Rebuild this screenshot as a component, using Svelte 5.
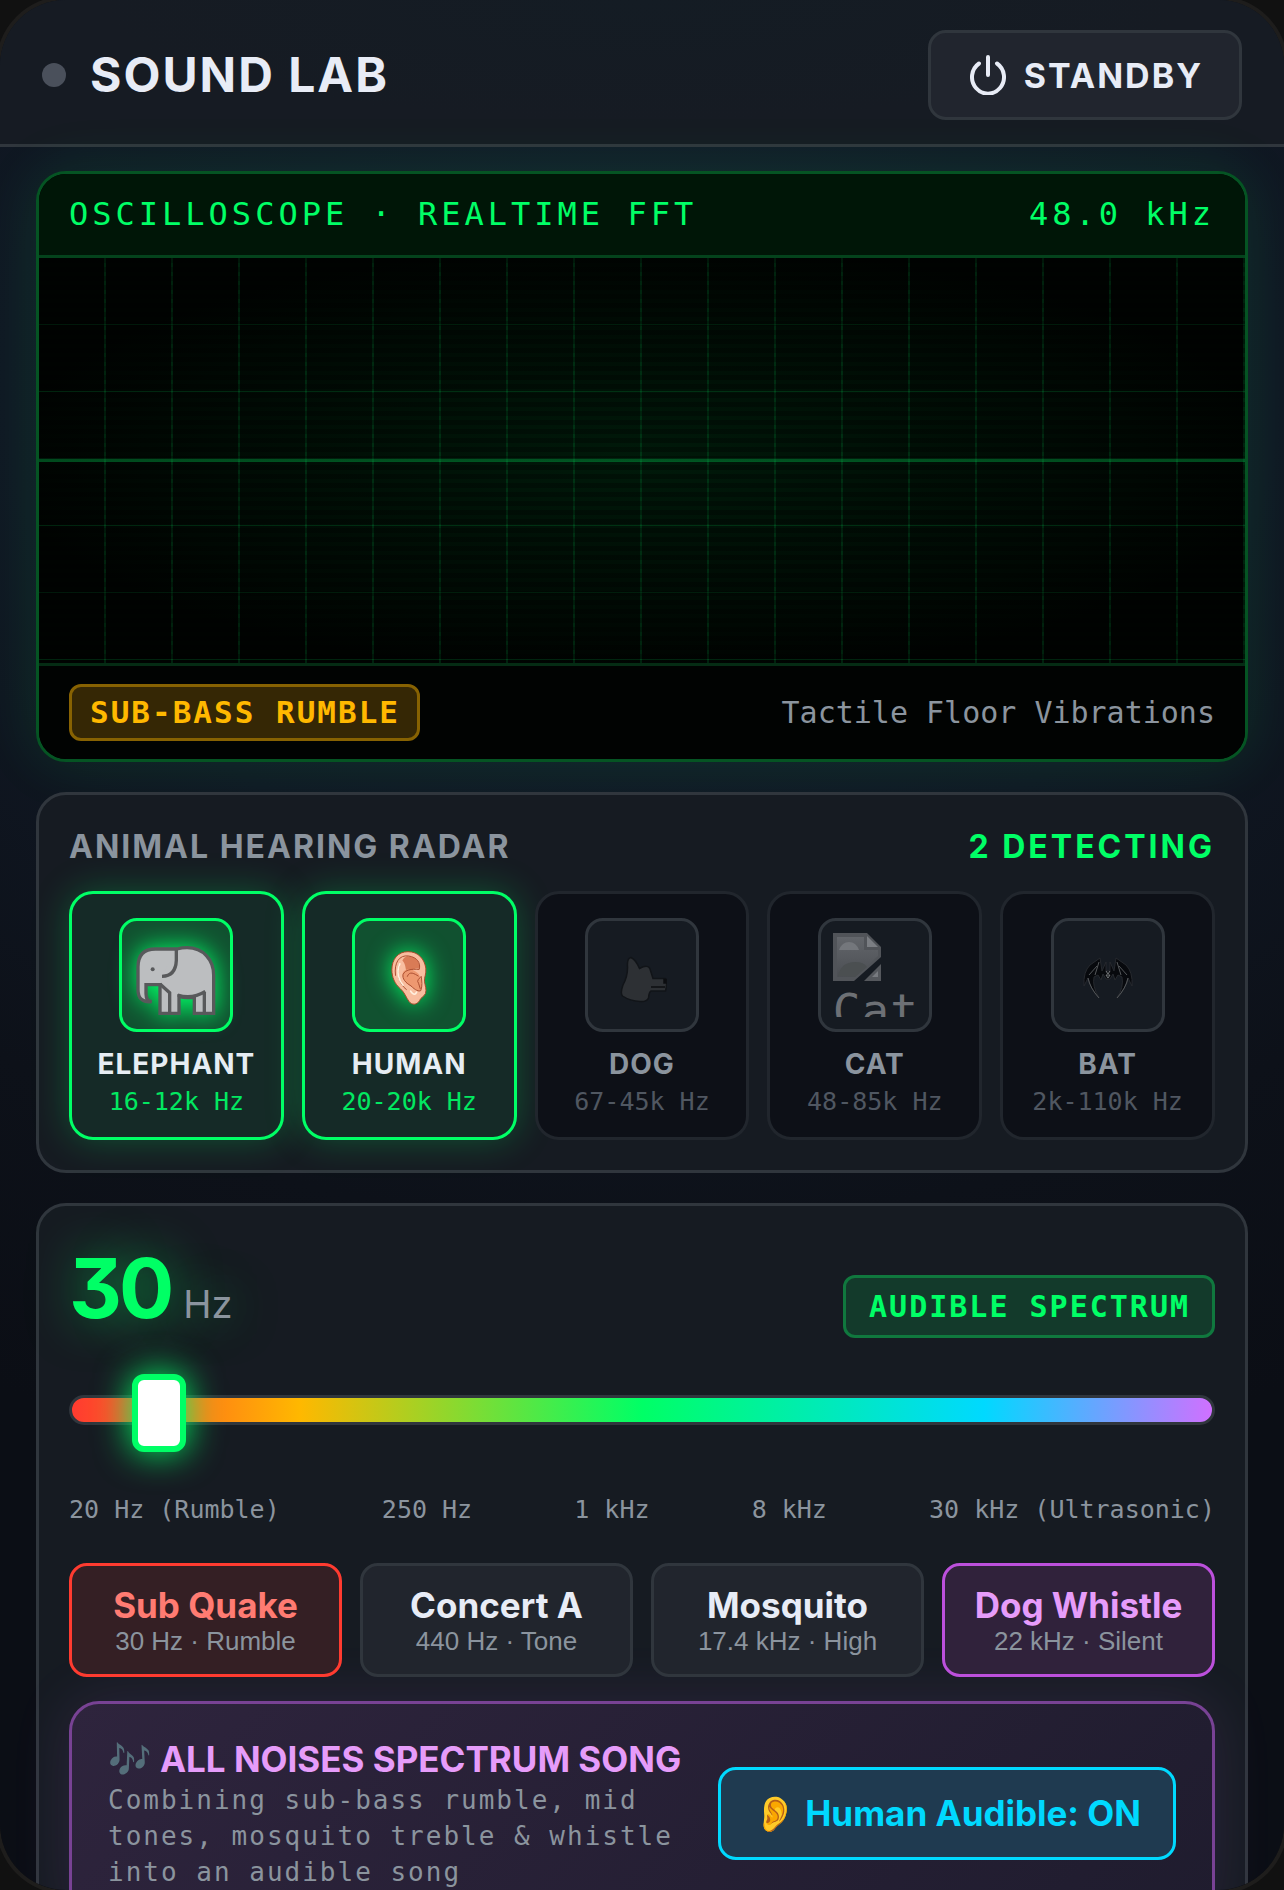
<script lang="ts">
  let frequency = $state(30);
  let humanAudible = $state(true);

  const MIN = 20;
  const MAX = 30000;

  // The slider runs on a logarithmic scale from 0 to 1000.
  let position = $state((1000 * Math.log(30 / MIN)) / Math.log(MAX / MIN));

  function slide() {
    frequency = Math.round(MIN * Math.pow(MAX / MIN, position / 1000));
  }

  function tune(hz: number) {
    frequency = hz;
    position = (1000 * Math.log(hz / MIN)) / Math.log(MAX / MIN);
  }

  const animals = [
    { id: 'elephant', name: 'ELEPHANT', range: '16-12k Hz', active: true },
    { id: 'human', name: 'HUMAN', range: '20-20k Hz', active: true },
    { id: 'dog', name: 'DOG', range: '67-45k Hz', active: false },
    { id: 'cat', name: 'CAT', range: '48-85k Hz', active: false },
    { id: 'bat', name: 'BAT', range: '2k-110k Hz', active: false }
  ];

  const presets = [
    { name: 'Sub Quake', note: '30 Hz · Rumble', hz: 30, tone: 'red' },
    { name: 'Concert A', note: '440 Hz · Tone', hz: 440, tone: 'plain' },
    { name: 'Mosquito', note: '17.4 kHz · High', hz: 17400, tone: 'plain' },
    { name: 'Dog Whistle', note: '22 kHz · Silent', hz: 22000, tone: 'purple' }
  ];

  const ticks = ['20 Hz (Rumble)', '250 Hz', '1 kHz', '8 kHz', '30 kHz (Ultrasonic)'];
</script>

<div class="device">
  <header class="topbar">
    <div class="brand">
      <span class="dot"></span>
      <h1>SOUND LAB</h1>
    </div>
    <button class="standby" type="button">
      <svg viewBox="0 0 36 40" width="36" height="40" aria-hidden="true">
        <path d="M18 2V20M9 8.500a16 16.500 0 1 0 18 0" fill="none" stroke="currentColor" stroke-width="4" stroke-linecap="round" />
      </svg>
      <span>STANDBY</span>
    </button>
  </header>

  <main>
    <section class="scope">
      <div class="scope-head">
        <span>OSCILLOSCOPE · REALTIME FFT</span>
        <span>48.0 kHz</span>
      </div>
      <div class="screen"></div>
      <div class="scope-foot">
        <strong class="badge amber">SUB-BASS RUMBLE</strong>
        <span>Tactile Floor Vibrations</span>
      </div>
    </section>

    <section class="panel radar">
      <div class="panel-head">
        <h2>ANIMAL HEARING RADAR</h2>
        <strong>2 DETECTING</strong>
      </div>
      <ul class="animals">
        {#each animals as animal (animal.id)}
          <li class="animal" class:active={animal.active}>
            <div class="portrait">
              {#if animal.id === 'elephant'}
                <svg viewBox="262 219 240 222" width="80" height="74" aria-hidden="true">
                  <g stroke="#58595b" stroke-width="10" fill="#bcbec0" transform="translate(0 7)">
                    <path d="M320 236H385Q400 232 415 232C465 232 495 270 495 314V429H437V380Q412 384 391 378V429H334V343H292V370Q292 392 309 394Q268 398 268 358V290Q268 236 320 236Z" />
                    <path d="M383 236V270Q381 317 340 318" />
                    <path d="M334 341L363 367V429M387 374Q430 388 470 363M467 365V429" fill="none" />
                  </g>
                  <circle cx="312" cy="304" r="6" fill="#58595b" />
                </svg>
              {:else if animal.id === 'human'}
                <svg viewBox="1018 230 114 170" width="38" height="56" aria-hidden="true">
                  <path d="M1072 235C1104 235 1122 258 1126 285C1128 304 1121 312 1122 325C1124 340 1129 349 1125 362C1119 374 1111 373 1107 384C1099 397 1083 398 1075 386C1066 374 1062 359 1049 348C1031 332 1023 312 1023 290C1023 258 1041 235 1072 235Z" fill="#f8bd9f" stroke="#a9492b" stroke-width="3" />
                  <path d="M1070 249C1093 248 1109 264 1107 287C1091 284 1078 292 1071 304C1062 291 1068 276 1055 262C1059 254 1064 250 1070 249Z" fill="#d97b56" />
                  <path d="M1056 300C1063 283 1086 287 1101 300C1112 309 1116 336 1111 353C1098 356 1084 342 1072 335C1061 327 1054 314 1056 300Z" fill="#ee9870" />
                  <path d="M1034 307C1029 267 1046 245 1073 248C1101 252 1111 270 1106 289C1081 287 1064 290 1057 304C1054 317 1064 329 1081 339C1094 352 1105 357 1111 353C1116 338 1114 325 1112 310L1103 320Q1099 325 1104 331L1109 347M1070 310C1076 292 1092 302 1103 309M1046 274C1037 302 1045 334 1067 350" fill="none" stroke="#ab4e31" stroke-width="3" stroke-linecap="round" />
                  <path d="M1047 272C1036 296 1044 323 1057 337M1080 355Q1092 372 1098 358" fill="none" stroke="#fff0df" stroke-width="5" stroke-linecap="round" />
                </svg>
              {:else if animal.id === 'dog'}
                <svg viewBox="-2 -5 50 54" width="50" height="54" aria-hidden="true">
                  <path d="M12 1.500Q17 4 20.500 12.500Q29 8 31 13L34 22.500H46Q49 25 46.500 35H32Q30 36 29.500 42Q28 46 21 45.500Q11 45 3.500 40Q1 37 4 29Q9 20 8.500 10Q8 2 12 1.500Z" fill="#2d3034" stroke="#111418" stroke-width="1.500" />
                  <path d="M32 31H46M45 23.500H47V27H45Z" fill="#0c0e11" stroke="#0c0e11" stroke-width="1.500" />
                </svg>
              {:else if animal.id === 'cat'}
                <div class="missing">
                  <svg viewBox="0 0 48 48" width="48" height="48" aria-hidden="true">
                    <defs>
                      <linearGradient id="paper" x1="0" y1="0" x2="0" y2="1">
                        <stop offset="0" stop-color="#63666b" />
                        <stop offset="1" stop-color="#4b4e53" />
                      </linearGradient>
                    </defs>
                    <path d="M0 0H34L48 14V24L21 48H0Z" fill="#515459" />
                    <path d="M4 4H31V17H45V23L22 44H4Z" fill="url(#paper)" />
                    <path d="M6 17Q9 9 16 9Q23 9 26 17Z" fill="#74777c" />
                    <path d="M5 43Q8 29 22 29Q31 29 34 34L22 44Z" fill="#4b4f51" />
                    <path d="M34 3L45 14H34Z" fill="#7b7e83" />
                    <path d="M48 31V48H31Z" fill="#55585d" />
                    <path d="M45 38V44H39Z" fill="#787b80" />
                  </svg>
                  <span>Cat</span>
                </div>
              {:else}
                <svg viewBox="0 0 52 42" width="52" height="42" aria-hidden="true">
                  <path d="M18 1L8 8Q1 15 2 29L6 21Q8 31 17 41Q10 29 12 20L16 18L19 23L21 17L24 22H28L31 17L33 23L36 18L40 20Q42 30 35 41Q44 31 46 21L50 29Q51 15 44 8L34 1L32 14L28 5L28 14H24L24 5L20 14Z" fill="#07090d" stroke="#26292e" stroke-width="1" />
                  <path d="M17 5L13 18M15 9L7 18M35 5L39 18M37 9L45 18M6 21Q8 31 17 41M46 21Q44 31 35 41" fill="none" stroke="#54575a" stroke-width="1" />
                  <path d="M24 14L26 17L28 14M24 18H28L26 21Z" fill="none" stroke="#777a7d" stroke-width="1" />
                </svg>
              {/if}
            </div>
            <strong>{animal.name}</strong>
            <span class="range">{animal.range}</span>
          </li>
        {/each}
      </ul>
    </section>

    <section class="panel tuner">
      <div class="readout">
        <div class="value"><strong>{frequency}</strong><span>Hz</span></div>
        <strong class="badge green">AUDIBLE SPECTRUM</strong>
      </div>
      <input class="slider" type="range" min="0" max="1000" step="any" aria-label="Frequency" bind:value={position} oninput={slide} />
      <div class="ticks">
        {#each ticks as tick}
          <span>{tick}</span>
        {/each}
      </div>
      <div class="presets">
        {#each presets as preset (preset.name)}
          <button type="button" class="preset {preset.tone}" onclick={() => tune(preset.hz)}>
            <strong>{preset.name}</strong>
            <span>{preset.note}</span>
          </button>
        {/each}
      </div>
      <div class="song">
        <div class="song-text">
          <h3><span class="notes">🎶</span> ALL NOISES SPECTRUM SONG</h3>
          <p>Combining sub-bass rumble, mid tones, mosquito treble &amp; whistle into an audible song</p>
        </div>
        <button type="button" class="audible" aria-pressed={humanAudible} onclick={() => (humanAudible = !humanAudible)}>
          <span>👂</span> Human Audible: {humanAudible ? 'ON' : 'OFF'}
        </button>
      </div>
    </section>
  </main>
</div>

<style>
  :global(body) {
    background: #111;
  }

  .device {
    --sans: Inter, 'Liberation Sans', 'Noto Color Emoji', sans-serif;
    --mono: 'DejaVu Sans Mono', 'Liberation Mono', monospace;
    --green: #00ff66;
    --line: #30363d;
    --muted: #8b949e;
    box-sizing: border-box;
    height: 100vh;
    overflow: hidden;
    border-radius: 66px;
    box-shadow: 0 0 0 4px #1e1d1c;
    background: radial-gradient(ellipse 110% 60% at 50% 20%, #13202d 0, #101824 45%, #0d1119 75%, #0b0e15 100%);
    color: #e6edf3;
    font-family: var(--sans);
  }

  .device *,
  .device *::before {
    box-sizing: border-box;
  }

  h1,
  h2,
  h3,
  p,
  ul {
    margin: 0;
    padding: 0;
  }

  button {
    font-family: inherit;
    cursor: pointer;
  }

  .topbar {
    display: flex;
    align-items: center;
    justify-content: space-between;
    padding: 30px 42px 24px;
    border-bottom: 3px solid var(--line);
    background: radial-gradient(ellipse at 50% 0, #141c24 0, #161b23 60%);
    color: #e8ecf6;
  }

  .brand {
    display: flex;
    align-items: center;
    gap: 24px;
  }

  .dot {
    width: 24px;
    height: 24px;
    border-radius: 50%;
    background: #4a505b;
  }

  h1 {
    font-size: 48px;
    line-height: 60px;
    letter-spacing: 2px;
  }

  .standby {
    display: flex;
    align-items: center;
    gap: 18px;
    height: 90px;
    padding: 0 36px 0 39px;
    border: 3px solid var(--line);
    border-radius: 18px;
    background: #21252e;
    color: #e8ecf6;
    font-size: 34px;
    font-weight: 700;
    letter-spacing: 2px;
  }

  main {
    display: flex;
    flex-direction: column;
    gap: 30px;
    padding: 24px 36px;
  }

  .scope {
    overflow: hidden;
    border: 3px solid #055423;
    border-radius: 30px;
    background: #000;
    box-shadow: 0 0 60px rgba(0, 255, 102, 0.11);
    font-family: var(--mono);
  }

  .scope-head,
  .scope-foot {
    display: flex;
    align-items: center;
    justify-content: space-between;
    padding: 0 30px;
  }

  .scope-head {
    height: 84px;
    padding-bottom: 2px;
    border-bottom: 3px solid #04431c;
    background: #001607;
    color: var(--green);
    font-size: 32px;
    letter-spacing: 4px;
  }

  .screen {
    height: 405px;
    background:
      linear-gradient(transparent 201px, rgba(0, 255, 102, 0.28) 201px 204px, transparent 204px),
      repeating-linear-gradient(rgba(0, 0, 0, 0.3) 0 5px, transparent 5px 9px),
      repeating-linear-gradient(90deg, transparent 0 65px, rgba(0, 255, 102, 0.12) 65px 67px),
      repeating-linear-gradient(transparent 0 66px, rgba(0, 255, 102, 0.13) 66px 67px),
      radial-gradient(ellipse at center, #001a0a 0, #000301 75%);
  }

  .scope-foot {
    height: 96px;
    border-top: 3px solid #052c14;
    background: #010302;
    color: var(--muted);
    font-size: 30px;
  }

  .badge {
    border: 3px solid;
    border-radius: 12px;
    font-family: var(--mono);
    letter-spacing: 2px;
  }

  .amber {
    padding: 0 17px 0 18px;
    border-color: #876202;
    background: #352705;
    color: #ffb800;
    font-size: 31px;
    line-height: 51px;
  }

  .green {
    padding: 0 22px 0 23px;
    border-color: #10783e;
    background: #133a2b;
    color: var(--green);
    font-size: 30px;
    line-height: 57px;
  }

  .panel {
    border: 3px solid var(--line);
    border-radius: 30px;
    background: #161b22;
  }

  .radar {
    padding: 30px;
  }

  .panel-head {
    display: flex;
    align-items: center;
    justify-content: space-between;
    height: 42px;
    margin-bottom: 24px;
    color: var(--green);
    font-size: 32px;
    letter-spacing: 3px;
  }

  h2 {
    color: var(--muted);
    font-size: 32px;
    letter-spacing: 2px;
  }

  .animals {
    display: grid;
    grid-template-columns: repeat(5, 1fr);
    gap: 18px;
    list-style: none;
  }

  .animal {
    display: flex;
    flex-direction: column;
    align-items: center;
    padding: 24px 0 17px;
    border: 3px solid #21262d;
    border-radius: 24px;
    background: #0d1017;
    color: var(--muted);
  }

  .animal strong {
    margin-top: 13px;
    font-size: 28px;
    line-height: 38px;
    letter-spacing: 1px;
  }

  .range {
    color: #505761;
    font-family: var(--mono);
    font-size: 25px;
    line-height: 37px;
  }

  .portrait {
    display: flex;
    align-items: center;
    justify-content: center;
    width: 114px;
    height: 114px;
    padding: 12px;
    border: 3px solid var(--line);
    border-radius: 18px;
    background: #161b22;
  }

  .portrait > svg {
    margin-top: 5px;
  }

  .active {
    border-color: var(--green);
    background: #152a27;
    box-shadow: 0 0 36px rgba(0, 255, 102, 0.25);
    color: #e6edf3;
  }

  .active .portrait {
    border-color: var(--green);
    background: #115130;
  }

  .active .portrait svg {
    filter: drop-shadow(0 0 12px var(--green));
  }

  .active .range {
    color: #02e861;
  }

  .missing {
    width: 84px;
    height: 84px;
    overflow: hidden;
    color: #6d7075;
    font-family: var(--mono);
    font-size: 46px;
    line-height: 60px;
    letter-spacing: 1px;
  }

  .missing svg,
  .missing span {
    display: block;
  }

  .tuner {
    padding: 30px 30px 60px;
  }

  .readout {
    display: flex;
    align-items: flex-end;
    justify-content: space-between;
  }

  .value {
    display: flex;
    align-items: baseline;
    gap: 12px;
    height: 102px;
    color: var(--muted);
    font-size: 38px;
    line-height: 106px;
    text-shadow: 0 0 48px rgba(0, 255, 102, 0.5);
  }

  .value strong {
    color: var(--green);
    font-size: 82px;
    letter-spacing: -3px;
    font-feature-settings: 'cv09';
  }

  .slider {
    appearance: none;
    display: block;
    width: 100%;
    height: 30px;
    margin: 57px 0 67px;
    border: 3px solid var(--line);
    border-radius: 15px;
    background: linear-gradient(90deg, #ff3b30, #ffb800 20%, #00ff66 50%, #00d9ff 80%, #d070ff);
  }

  .slider::-webkit-slider-thumb {
    appearance: none;
    box-sizing: border-box;
    width: 54px;
    height: 78px;
    margin-top: 6px;
    border: 6px solid var(--green);
    border-radius: 12px;
    background: #fff;
    box-shadow: 0 0 36px var(--green);
  }

  .ticks {
    display: flex;
    justify-content: space-between;
    color: var(--muted);
    font-family: var(--mono);
    font-size: 25px;
    line-height: 36px;
  }

  .presets {
    display: grid;
    grid-template-columns: repeat(4, 1fr);
    gap: 18px;
    margin: 35px 0 24px;
  }

  .preset {
    display: flex;
    flex-direction: column;
    align-items: center;
    justify-content: center;
    height: 114px;
    padding: 0;
    border: 3px solid var(--line);
    border-radius: 18px;
    background: #21252d;
    color: #e8ecf6;
  }

  .preset strong {
    font-size: 35px;
    line-height: 42px;
  }

  .preset span {
    color: var(--muted);
    font-family: 'Liberation Sans', sans-serif;
    font-size: 26px;
    line-height: 30px;
  }

  .red {
    border-color: #ff3b30;
    background: #341f24;
    color: #ff7b72;
  }

  .purple {
    border-color: #bc50dc;
    background: #30223b;
    color: #e69cfa;
  }

  .song {
    display: flex;
    align-items: center;
    justify-content: space-between;
    gap: 24px;
    padding: 32px 36px;
    border: 3px solid #784294;
    border-radius: 30px;
    background: linear-gradient(135deg, #2e243d, #1f1c2e);
    box-shadow: 0 0 60px rgba(208, 112, 255, 0.12);
  }

  h3 {
    color: #e69cfa;
    font-size: 35px;
    line-height: 46px;
    white-space: nowrap;
  }

  p {
    color: var(--muted);
    font-family: var(--mono);
    font-size: 26px;
    line-height: 36px;
    letter-spacing: 2px;
  }

  .audible {
    flex: none;
    height: 93px;
    padding: 0 32px;
    border: 3px solid #00d9ff;
    border-radius: 18px;
    background: #1f3a50;
    color: #00d9ff;
    font-size: 35px;
    font-weight: 700;
  }
</style>
